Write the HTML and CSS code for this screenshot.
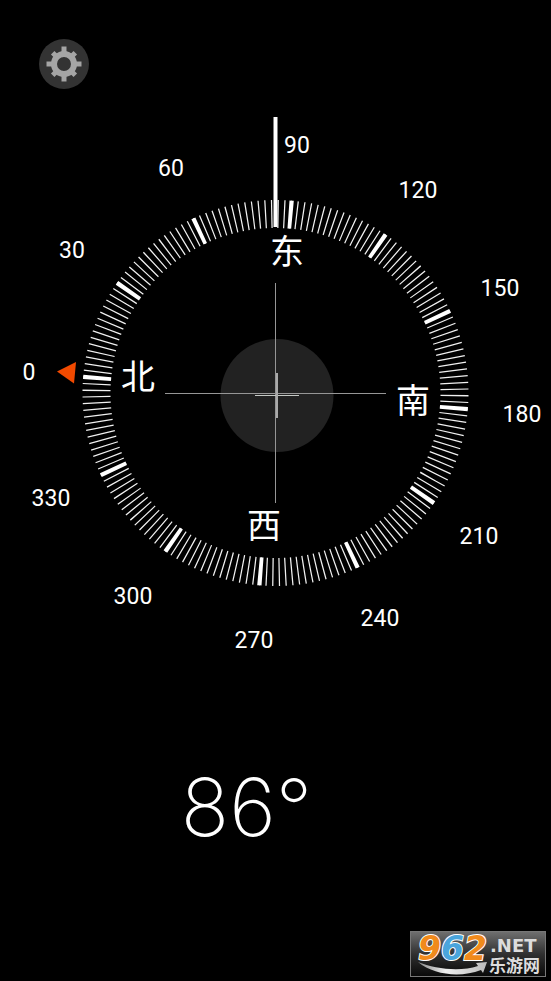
FILE: index.html
```html
<!DOCTYPE html>
<html lang="zh">
<head>
<meta charset="utf-8">
<meta name="viewport" content="width=device-width, initial-scale=1">
<title>指南针</title>
<link rel="stylesheet" href="styles.css">
</head>
<body>
<header class="toolbar">
  <button class="settings" type="button" aria-label="设置">
    <svg viewBox="0 0 50 50" aria-hidden="true">
      <circle class="gear-body" cx="25" cy="25" r="10"/>
      <g class="gear-teeth">
        <path id="tooth" d="M22.500 13V7.500h5V13z"/>
        <use href="#tooth" transform="rotate(90 25 25)"/>
        <use href="#tooth" transform="rotate(180 25 25)"/>
        <use href="#tooth" transform="rotate(270 25 25)"/>
        <path id="corner" d="M22.500 14V9h5v5z" transform="rotate(45 25 25)"/>
        <use href="#corner" transform="rotate(90 25 25)"/>
        <use href="#corner" transform="rotate(180 25 25)"/>
        <use href="#corner" transform="rotate(270 25 25)"/>
      </g>
    </svg>
  </button>
</header>
<main class="compass">
  <svg class="dial" viewBox="0 0 551 560" role="img" aria-label="指南针表盘">
    <circle class="level" cx="277" cy="295.500" r="56.500"/>
    <path class="cross" d="M165 293.500H386M275.500 183V403"/>
    <path class="bubble-h" d="M255 295.500H299"/>
    <path class="bubble-v" d="M277 273V318"/>
    <g transform="rotate(4.800 275.500 293)">
      <circle class="ticks" cx="275.500" cy="293" r="179" pathLength="360"/>
      <circle class="ticks major" cx="275.500" cy="293" r="179" pathLength="360"/>
    </g>
    <path class="needle" d="M275.500 17V127"/>
    <path class="north" d="M57 271.500L76 262L74 283.500Z"/>
    <g class="degrees">
      <text x="29" y="280">0</text>
      <text x="72" y="158">30</text>
      <text x="171" y="76">60</text>
      <text x="297" y="53">90</text>
      <text x="418" y="98">120</text>
      <text x="500" y="196">150</text>
      <text x="522" y="322">180</text>
      <text x="479" y="444">210</text>
      <text x="380" y="526">240</text>
      <text x="254" y="548">270</text>
      <text x="133" y="504">300</text>
      <text x="51" y="406">330</text>
    </g>
    <g class="cardinals">
      <text x="287" y="164">东</text>
      <text x="413" y="313">南</text>
      <text x="264" y="438">西</text>
      <text x="138" y="289">北</text>
    </g>
  </svg>
  <output class="heading">86°</output>
</main>
<footer class="footer">
  <svg class="brand" viewBox="0 0 136 46" role="img" aria-label="962.NET 乐游网">
    <defs>
      <linearGradient id="plate" x1="0" y1="0" x2="0" y2="1">
        <stop offset="0" stop-color="#707070"/>
        <stop offset="0.500" stop-color="#303030"/>
        <stop offset="1" stop-color="#080808"/>
      </linearGradient>
      <linearGradient id="silver" x1="0" y1="0" x2="1" y2="0">
        <stop offset="0" stop-color="#888"/>
        <stop offset="0.400" stop-color="#eee"/>
        <stop offset="1" stop-color="#bbb"/>
      </linearGradient>
    </defs>
    <rect x="0.500" y="0.500" width="135" height="45" fill="url(#plate)" stroke="#777"/>
    <path d="M8 31C25 38 50 41 68 35L66 32L77 31L73 42L71 39C50 47 24 44 8 31Z" fill="url(#silver)"/>
    <text class="brand-number" x="8" y="29"><tspan class="orange">9</tspan><tspan class="blue">6</tspan><tspan class="orange">2</tspan></text>
    <text class="brand-net" x="80" y="21">.NET</text>
    <text class="brand-name" x="79" y="41">乐游网</text>
  </svg>
</footer>
</body>
</html>
```
FILE: styles.css
```css
* {
  box-sizing: border-box;
}

body {
  margin: 0;
  min-height: 100vh;
  display: flex;
  flex-direction: column;
  background: #000;
  color: #fff;
  font-family: Roboto, "Noto Sans CJK SC", sans-serif;
}

.toolbar {
  padding: 39px 39px 11px;
}

.settings {
  display: block;
  width: 50px;
  height: 50px;
  padding: 0;
  border: 0;
  border-radius: 50%;
  background: #333;
}

.settings svg {
  display: block;
  width: 100%;
}

.gear-body {
  fill: none;
  stroke: #a5a5a5;
  stroke-width: 6;
}

.gear-teeth {
  fill: #a5a5a5;
}

.compass {
  display: flex;
  flex-direction: column;
}

.dial {
  display: block;
  width: 100%;
}

.level {
  fill: #222;
}

.cross {
  fill: none;
  stroke: #969696;
  stroke-width: 1;
}

.bubble-h {
  stroke: #c4c8c4;
  stroke-width: 1;
}

.bubble-v {
  stroke: #aaa;
  stroke-width: 2;
}

.ticks {
  fill: none;
  stroke: #f0f0f0;
  stroke-width: 28;
  stroke-dasharray: 0.4 1.6;
  stroke-dashoffset: 0.2;
}

.major {
  stroke: #fff;
  stroke-dasharray: 1.3 28.7;
  stroke-dashoffset: 0.65;
}

.needle {
  stroke: #fff;
  stroke-width: 4;
}

.north {
  fill: #f24a00;
}

.degrees,
.cardinals {
  fill: #fff;
  text-anchor: middle;
}

.degrees {
  font-size: 23px;
}

.cardinals {
  font-family: "Noto Sans CJK SC", sans-serif;
  font-size: 34px;
}

.heading {
  display: block;
  padding-right: 58px;
  margin-top: 99px;
  font-family: Inter, sans-serif;
  font-size: 80px;
  font-weight: 200;
  line-height: 96px;
  text-align: center;
}

.footer {
  display: flex;
  justify-content: flex-end;
  margin-top: auto;
  padding: 0 5px 4px;
}

.brand {
  display: block;
  width: 136px;
  overflow: visible;
}

.brand-number {
  font-family: "DejaVu Sans", sans-serif;
  font-size: 33px;
  font-style: italic;
  font-weight: 700;
  stroke: #fff;
  stroke-width: 2;
  paint-order: stroke;
}

.orange {
  fill: #f08a1c;
}

.blue {
  fill: #4aa5dc;
}

.brand-net {
  fill: #ddd;
  font-family: "DejaVu Sans", sans-serif;
  font-size: 18px;
  font-weight: 700;
}

.brand-name {
  fill: #ddd;
  font-family: "Noto Sans CJK SC", sans-serif;
  font-size: 17px;
  font-weight: 700;
}
```
